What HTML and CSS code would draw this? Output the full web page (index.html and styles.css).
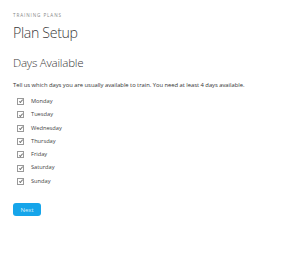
FILE: index.html
```html
<!DOCTYPE html>
<html lang="en">
  <head>
    <meta charset="UTF-8" />
    <meta name="viewport" content="width=device-width, initial-scale=1" />
    <title>Plan Setup</title>
    <link rel="stylesheet" href="styles.css">
  </head>
  <body>
    <div class="page">
      <div class="eyebrow">Training Plans</div>
      <h1>Plan Setup</h1>
      <h2>Days Available</h2>
      <p class="intro">Tell us which days you are usually available to train. You need at least 4 days available.</p>
      <ul class="days">
        <li><span class="box"></span>Monday</li>
        <li><span class="box"></span>Tuesday</li>
        <li><span class="box"></span>Wednesday</li>
        <li><span class="box"></span>Thursday</li>
        <li><span class="box"></span>Friday</li>
        <li><span class="box"></span>Saturday</li>
        <li><span class="box"></span>Sunday</li>
      </ul>
      <button class="next-btn">Next</button>
    </div>
  </body>
</html>
```

FILE: styles.css
```css
body {
  margin: 0;  font-family: 'Open Sans', 'Noto Sans', sans-serif;  color: #3a3a3a;  background: #fff;
}
.page {
  padding: 10px 13px;
}
.eyebrow {
  text-transform: uppercase;  font-size: 4.6px;  letter-spacing: 0.9px;  color: #888;  line-height: 8px;  margin-top: 1px;
}
h1 {
  font-weight: 300;  font-size: 14.2px;  margin: 4px 0 0;  line-height: 20px;  letter-spacing: -0.35px;
}
h2 {
  font-weight: 300;  font-size: 11.6px;  margin: 12px 0 0;  line-height: 16px;  letter-spacing: -0.25px;
}
.intro {
  font-size: 5.85px;  margin: 10px 0 0;  line-height: 8px;  letter-spacing: -0.03px;  color: #333;
}
.days {
  list-style: none;  margin: 6px 0 0;  padding: 0 0 0 4px;
}
.days li {
  display: flex;  align-items: center;  font-size: 5.7px;  height: 13.3px;  line-height: 13.3px;  color: #444;
}
.box {
  width: 5px;  height: 5px;  border: 0.7px solid #999;  margin-right: 7px;  position: relative;
}
.box::after {
  content: "";  position: absolute;  left: 1.5px;  top: 0.2px;  width: 1.4px;  height: 2.8px;  border: solid #777;  border-width: 0 0.7px 0.7px 0;  transform: rotate(40deg);
}
.next-btn {
  display: block;  margin-top: 15px;  width: 28px;  height: 13px;  border: none;  border-radius: 3px;  background: #16a5ea;  color: #d9f0fb;  font-family: inherit;  font-size: 6px;  padding: 0;
}
```
